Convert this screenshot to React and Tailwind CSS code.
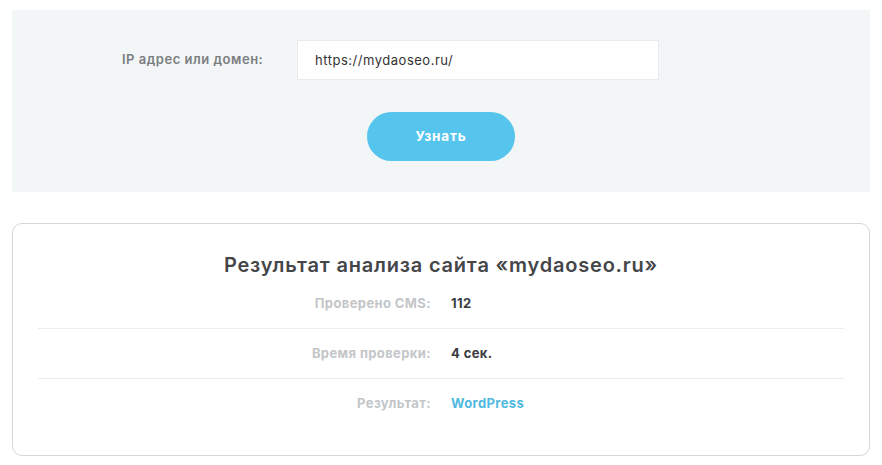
import React from "react";

const rows = [
  { label: "Проверено CMS:", value: "112" },
  { label: "Время проверки:", value: "4 сек." },
  { label: "Результат:", value: "WordPress", accent: true },
];

const App = () => {
  return (
    <div className="min-h-screen bg-white px-3 pt-[10px] font-['Inter',sans-serif]">
      {/* Search form */}
      <div className="bg-[#f2f6f7] pt-[30px] pb-[31px]">
        <div className="flex items-center pl-[110px]">
          <label className="w-[175px] text-[13px] font-semibold tracking-[0.04em] text-[#7b7e80]">
            IP адрес или домен:
          </label>
          <input
            type="text"
            defaultValue="https://mydaoseo.ru/"
            className="h-10 w-[362px] border border-[#e8ecee] bg-white px-[17px] text-[13px] tracking-[0.04em] text-[#333] outline-none"
          />
        </div>
        <div className="mt-8 flex justify-center">
          <button className="h-[49px] w-[148px] rounded-full bg-[#55c5ed] text-[13.5px] font-bold tracking-[0.06em] text-white">
            Узнать
          </button>
        </div>
      </div>

      {/* Result card */}
      <div className="mt-[31px] rounded-[10px] border border-[#d6d6d6] px-[25px] pt-[27px] pb-[26px]">
        <h2 className="text-center text-[20px] leading-7 font-semibold tracking-[0.04em] text-[#444649]">
          Результат анализа сайта «mydaoseo.ru»
        </h2>
        <div>
          {rows.map((row, i) => (
            <div
              key={row.label}
              className={`grid h-[50px] grid-cols-2 items-center gap-x-5 text-[13px] font-bold tracking-[0.03em] ${
                i < rows.length - 1 ? "border-b border-[#ececec]" : ""
              }`}
            >
              <span className="text-right text-[#c3c6c9]">{row.label}</span>
              <span className={row.accent ? "text-[#4fb9e0]" : "text-[#3a3c3f]"}>{row.value}</span>
            </div>
          ))}
        </div>
      </div>
    </div>
  );
};

export default App;
